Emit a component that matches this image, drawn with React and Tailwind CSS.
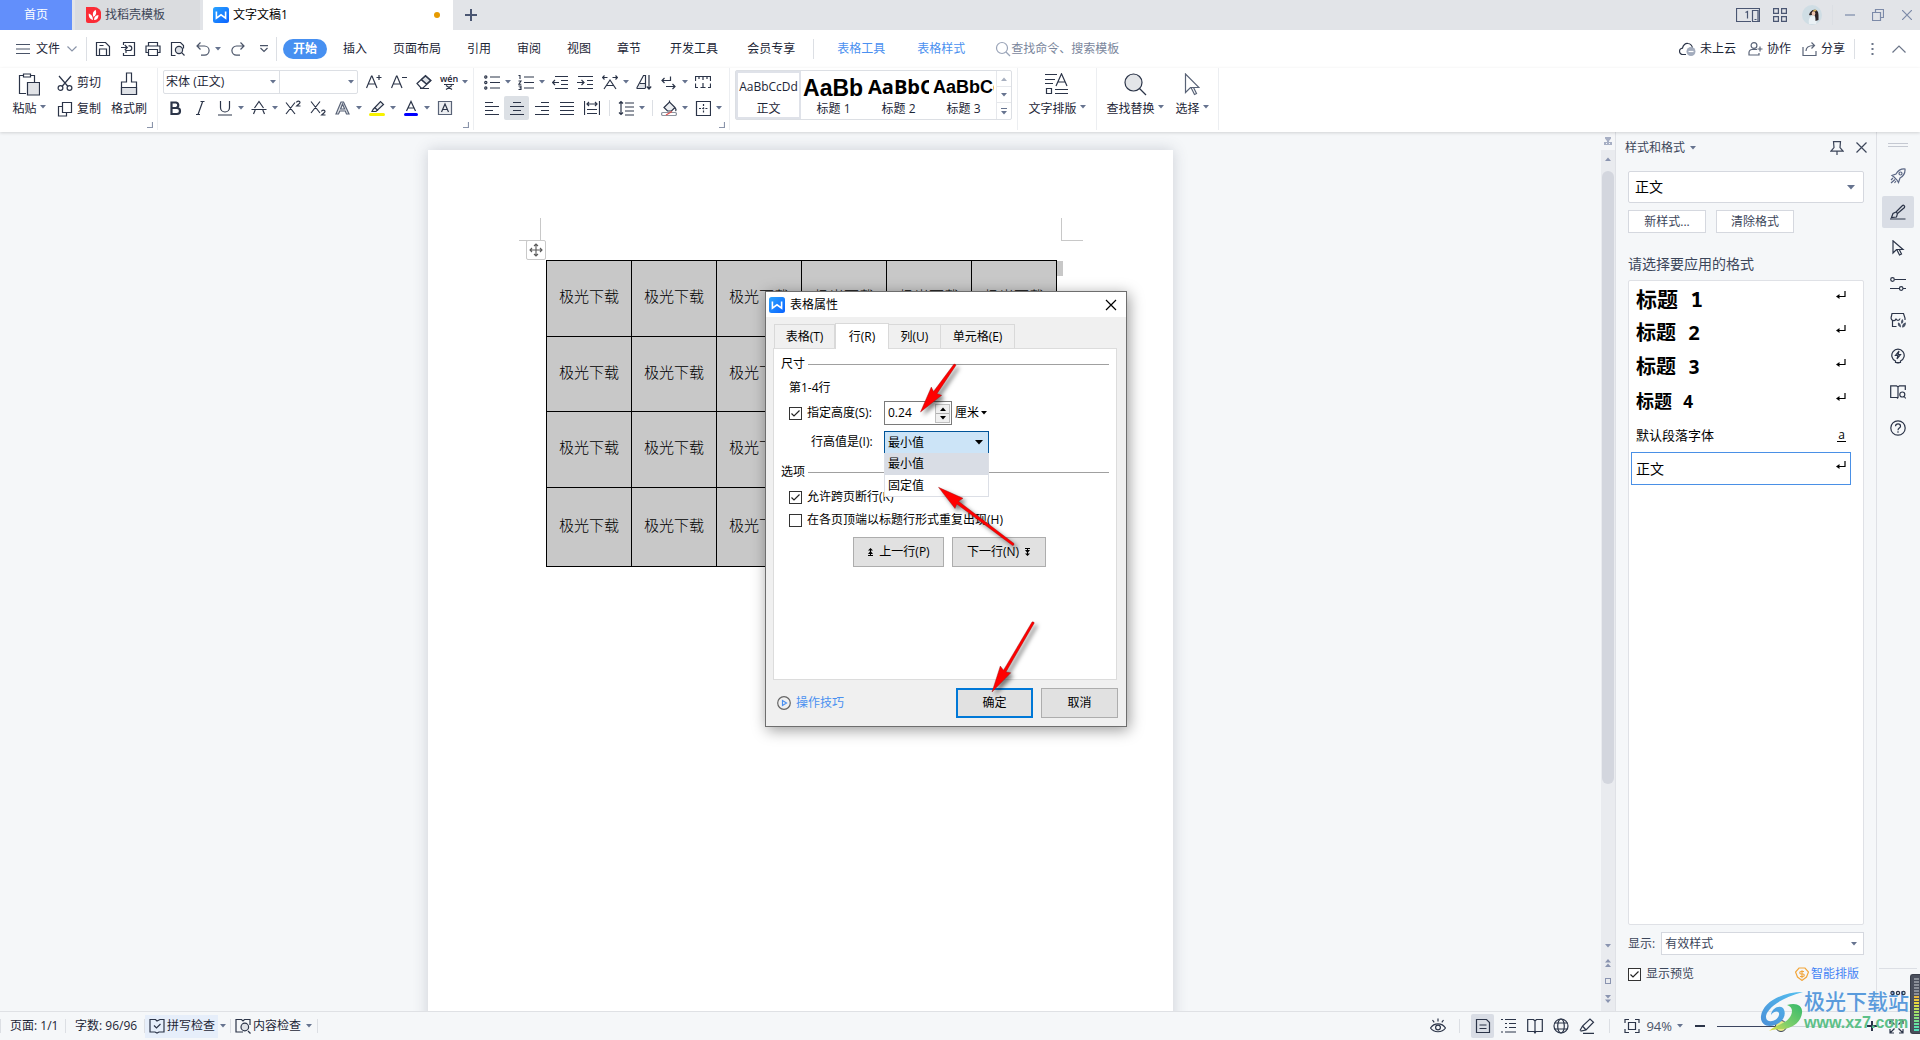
import React from "react";

const Svg = ({ w = 16, h = 16, s = "#2b3448", className = "", children }) => (
  <svg width={w} height={h} viewBox={`0 0 ${w} ${h}`} fill="none" stroke={s} strokeWidth="1.2" aria-hidden="true" className={"shrink-0 " + className}>
    {children}
  </svg>
);

const Caret = ({ c = "#66738f", className = "" }) => (
  <svg width="6" height="4" viewBox="0 0 6 4" aria-hidden="true" className={"shrink-0 " + className}>
    <path d="M0 0h6L3 3.6z" fill={c} />
  </svg>
);

const Divider = () => <div className="w-px h-[62px] shrink-0 bg-[#eceef1]" />;
const MiniDivider = ({ className = "" }) => <div className={"w-px shrink-0 bg-[#dcdfe4] " + className} />;
const Launcher = () => (
  <Svg w={6} h={6} s="#8a94aa" className="absolute bottom-1 right-1">
    <path d="M5.5 0v5.5H0" />
  </Svg>
);

const WpsLogo = ({ size = 16 }) => (
  <svg width={size} height={size} viewBox="0 0 16 16" aria-hidden="true" className="shrink-0">
    <defs>
      <linearGradient id="wg" x1="0" y1="0" x2="1" y2="1">
        <stop offset="0" stopColor="#2ba4ff" />
        <stop offset="1" stopColor="#0a62ff" />
      </linearGradient>
    </defs>
    <rect width="16" height="16" rx="2.5" fill="url(#wg)" />
    <path d="M3.4 4.6v6.6L8 7.8l4.6 3.400V4.6" fill="none" stroke="#fff" strokeWidth="1.6" />
  </svg>
);

/* ---------- icon drawings, 16 x 16 ---------- */
const A = "#2b3448";
const I = {
  save: <Svg><path d="M1.5 14.5v-13h9l4 4v9zM4.500 14.500v-6.500h7v6.500M4.500 4.500h4" /></Svg>,
  out: <Svg><path d="M3.500 4V1.500h11v13h-11V12M1 6.500h6M4.800 4l2.500 2.500L4.800 9M6 12V9.500h3.500a2.300 2.300 0 0 0 0-4.600H8.500" /></Svg>,
  print: <Svg><path d="M3.500 5V1.500h9V5M3.500 11.500h-2.500v-6.500h14v6.500h-2.500M3.500 8.500h9v6h-9z" /></Svg>,
  preview: <Svg><path d="M5.500 14.500h-4v-13h9l3 3v3M14.500 14.500l-2.800-2.800" /><circle cx="9" cy="9" r="3.600" fill="#dfe2e7" /></Svg>,
  undo: <Svg s="#4a5468"><path d="M5.500 1.500l-3.500 3.500 3.500 3.500M2 5h7.500a4.600 4.600 0 0 1 0 9.200H6" /></Svg>,
  redo: <Svg s="#4a5468"><path d="M10.500 1.500l3.500 3.500-3.500 3.500M14 5H6.500a4.600 4.600 0 0 0 0 9.200H10" /></Svg>,
  cut: <Svg><circle cx="3.500" cy="13" r="2.400" /><circle cx="12.500" cy="13" r="2.400" /><path d="M2 1l9 10.500M14 1L5 11.500" /></Svg>,
  copy: <Svg><path d="M5.500 1.500h9v10h-9zM5 5.500H1.500v9.500h8V12" /></Svg>,
  aPlus: <Svg><path d="M.5 14L5.500 2h.5l5 12M2.500 10h6.500M10.500 3.500h5M13 1v5" /></Svg>,
  aMinus: <Svg><path d="M.5 14L5.500 2h.5l5 12M2.500 10h6.500M11 3.500h5" /></Svg>,
  eraser: <Svg><path d="M1 9.500L9.500 1.500l5.500 5-8 7.500H5zM5 5.500l6 5M4 14.500h9" /><path d="M5.500 5.500L9.500 2l5 4.500-4 3.500z" fill="#dfe2e7" /></Svg>,
  italic: <Svg><path d="M10.500 2L6 14.500M8.500 1.500h4M4 14.500h4" /></Svg>,
  under: <Svg><path d="M3.500 1v6.500a4.500 4.500 0 0 0 9 0V1M1 15h14" /></Svg>,
  strike: <Svg><path d="M3.500 8L8 1.500 12.500 8M2.500 14l1.700-4M13.500 14l-1.700-4M0.500 9.500h15" /></Svg>,
  sup: <Svg><path d="M1 2.500l9 11.500M10 2.500L1 14M11.500 2.500c.3-2 3.500-1.800 3.500 0 0 1-1.500 1.600-3.300 3.500H15.500" /></Svg>,
  sub: <Svg><path d="M1 1.500l9 11.500M10 1.500L1 13M11.500 11.500c.3-2 3.500-1.800 3.500 0 0 1-1.500 1.600-3.300 3.500H15.500" /></Svg>,
  effect: <Svg s="#596377"><path d="M1 14L6 2h2.500L14 14h-2.500l-1.200-3H4.800L3.500 14zM5.600 9h4L7.500 4z" fill="#e4e6ea" /></Svg>,
  hilite: <Svg><path d="M4 9.500L11.500 1.500 14.500 4.500 7 11.500H3z" fill="#eceef1" /><path d="M5.500 7.500l3.500 3" /><rect x="0" y="13" width="16" height="3" rx="1.500" fill="#f7f200" stroke="none" /></Svg>,
  color: <Svg><path d="M3.500 11L8 1.500 12.500 11M5 8h6" /><rect x="1" y="13" width="14" height="3" rx="1.500" fill="#0000ff" stroke="none" /></Svg>,
  abox: <Svg><path d="M1.500 1.500h13v13h-13z" fill="#eceef1" stroke="#596377" /><path d="M4.500 12L8 4l3.500 8M5.800 9.500h4.500" /></Svg>,
  bullets: <Svg><path d="M6 3h10M6 8.500h10M6 14h10" /><circle cx="1.800" cy="3" r="1.100" /><circle cx="1.800" cy="8.500" r="1.100" /><circle cx="1.800" cy="14" r="1.100" /></Svg>,
  numbers: <Svg><path d="M6 3h10M6 8.500h10M6 14h10M0.500 1.500h1.500v3.500M0.500 7h2.500L.8 10.200H3.300M.5 12h2.500v3.500H.5M1.500 13.700h1.500" strokeWidth="1.100" /></Svg>,
  outdent: <Svg><path d="M3 2.500h13M9 6.500h7M9 10.500h7M3 14.500h13M0.500 8.500H7M3 6L.6 8.500 3 11" /></Svg>,
  indent: <Svg><path d="M1 2.500h15M10 6.500h6M10 10.500h6M1 14.500h15M0 8.500H7M4.500 6L7 8.500 4.500 11" /></Svg>,
  scale: <Svg><path d="M2 15L8 6l6 9M4.500 11.500h7M0.500 3.500h5M10.500 3.500h5M2.500 1.500l-2 2 2 2M13.500 1.500l2 2-2 2" /></Svg>,
  sort: <Svg><path d="M2 14l3-5h4v5z" fill="#dfe2e7" stroke="none" /><path d="M.8 14L7.500 1.500h2V14M4 9.500h5.500M0.500 14.500h9M13 1v14M10.800 12.500L13 15l2.200-2.500" /></Svg>,
  wrap: <Svg><path d="M9.500 2.500v4H1M3.500 4L1 6.500 3.500 9M5 12.500h9M11.500 10l2.500 2.500-2.500 2.500" /></Svg>,
  ruler: <Svg><path d="M.5 7V2.500h15V7M4 2.500V5M8 2.500V6M12 2.500V5M.5 9.500v4H3M15.500 9.500v4H13M5.500 13.500h5M8 9v4.500" /></Svg>,
  left: <Svg><path d="M1 2.500h8M1 6.500h14M1 10.500h8M1 14.500h14" /></Svg>,
  center: <Svg><path d="M4 2.500h8M1 6.500h14M4 10.500h8M1 14.500h14" /></Svg>,
  right: <Svg><path d="M7 2.500h8M1 6.500h14M7 10.500h8M1 14.500h14" /></Svg>,
  justify: <Svg><path d="M1 2.500h14M1 6.500h14M1 10.500h14M1 14.500h14" /></Svg>,
  dist: <Svg><path d="M.5 1v14M15.500 1v14M3 9.500h10M3 13.500h10M3 4h10M5 2L3 4l2 2M11 2l2 2-2 2" /></Svg>,
  line: <Svg><path d="M7 3h9M7 7h9M7 11h9M7 15h9M3 1.500v13M1 3.500L3 1.500l2 2M1 12.500l2 2 2-2" /></Svg>,
  shade: <Svg><path d="M3 7.500L8.500 2l5.500 5.500-3.500 3.500h-4zM8.500 2V.5M14 8c1 1 1.500 2 .5 3" fill="#eceef1" /><path d="M3 12.500h11a1.300 1.300 0 0 1 0 3H2a1.300 1.300 0 0 1 0-3z" fill="#fff" stroke="#8d949f" /><path d="M5 15l6-3.500" stroke="#e0524e" /></Svg>,
  border: <Svg><path d="M1.500 1.500h14v14h-14z" /><path d="M8.500 4v9M4 8.500h9" strokeDasharray="2 1.200" /></Svg>,
  search: (c = "#7a869c") => <Svg s={c}><circle cx="7" cy="7" r="5.500" /><path d="M11 11l4 4" /></Svg>,
};

const Wen = () => (
  <span className="flex w-4 shrink-0 flex-col items-center text-[9px] leading-[9px] font-semibold">
    <span>wén</span>
    <Svg w={12} h={7}><path d="M1 1.500h10M3 6.500l6-4M3 2.500l6 4" /></Svg>
  </span>
);

const Tool = ({ label, children, caret, last }) => (
  <button
    aria-label={label}
    className={"flex h-6 shrink-0 items-center gap-[5px] " + (last ? "" : caret ? "w-[34px]" : "w-[25px]")}
  >
    {children}
    {caret && <Caret />}
  </button>
);

const BigTool = ({ label, icon, caret, className = "" }) => (
  <button className={"flex shrink-0 flex-col items-center pt-1 " + className}>
    <span className="flex h-6 items-center">{icon}</span>
    <span className="flex h-[26px] items-center gap-[3px] leading-4 whitespace-nowrap">
      {label}
      {caret && <Caret className="mb-1" />}
    </span>
  </button>
);

function TitleBar() {
  return (
    <div className="flex h-[30px] shrink-0 bg-[#e2e4e8]">
      <button className="w-[72px] bg-[#628ffb] text-white">首页</button>
      <button className="ml-[3px] flex w-[125px] items-center gap-1 bg-[#dadcdf] pl-[11px] text-[#3d4557]">
        <svg width="15" height="16" viewBox="0 0 15 16" aria-hidden="true">
          <path d="M0 0h8a7.500 8 0 0 1 0 16H2a2 2 0 0 1-2-2z" fill="#fb2c36" />
          <path d="M7 13C3.500 12 2.500 9.500 2.800 6.500 5.500 7.500 7 9.500 7 13zM7.500 10C6 7 7 4.500 9.500 2.800 11 6 10 8.500 7.500 10zM8 13c0-3 1.500-4.500 4.500-5 0 3-1.500 5-4.500 5z" fill="#fff" />
        </svg>
        找稻壳模板
      </button>
      <button className="ml-[3px] flex w-[250px] items-center gap-1 bg-white pr-[13px] pl-[10px] text-black">
        <WpsLogo />
        文字文稿1
        <span className="ml-auto size-[6px] rounded-full bg-[#e69a00]" />
      </button>
      <button aria-label="新建" className="flex w-9 items-center justify-center">
        <Svg w={12} h={12} s="#4a5672"><path d="M6 0v12M0 6h12" strokeWidth="2" /></Svg>
      </button>
      <div className="ml-auto flex items-center pr-2">
        <button aria-label="窗口布局">
          <Svg w={24} h={14} s="#4a5672"><path d="M15 13.500H.5V.5h23v13H16.500V2.500h5.500v11" /><path d="M9.500 4.500l2-1v7M18.500 11.500h2" /></Svg>
        </button>
        <button aria-label="应用" className="ml-[13px]">
          <Svg w={14} h={14} s="#4a5672"><path d="M.6.6h4.800v4.800H.6zM8.600.6h4.800v4.800H8.600zM.6 8.600h4.800v4.800H.6zM8.600 8.600h4.800v4.800H8.600z" /></Svg>
        </button>
        <svg width="20" height="20" viewBox="0 0 20 20" className="ml-[15px]" aria-hidden="true">
          <circle cx="10" cy="10" r="10" fill="#cfdde4" />
          <path d="M7 19c-1-5 1-8 4-8s5 2 3 8z" fill="#eaf1f5" />
          <path d="M7 10c1-4 4-6 7-5 3 1 2.500 6 2.500 10l-3 1c0-4-.5-5-1.500-7-1 1-3 1.500-5 1z" fill="#2c2225" />
          <ellipse cx="11.500" cy="8.500" rx="1.800" ry="2.300" fill="#ecc3ae" />
          <path d="M11 5.500l3-1 .5 1.500-3 .8z" fill="#d9b35c" />
        </svg>
        <MiniDivider className="ml-[10px] h-5" />
        <button aria-label="最小化" className="ml-3"><Svg w={10} h={10} s="#7c8aa8"><path d="M0 5h10" /></Svg></button>
        <button aria-label="还原" className="ml-[17px]"><Svg w={12} h={12} s="#7c8aa8"><path d="M.5 3.500h8v8h-8zM3.500 3.500V.5h8v8h-3" /></Svg></button>
        <button aria-label="关闭" className="ml-[18px]"><Svg w={10} h={10} s="#7c8aa8"><path d="M0 0l10 10M10 0L0 10" /></Svg></button>
      </div>
    </div>
  );
}

const menuTabs = ["插入", "页面布局", "引用", "审阅", "视图", "章节"];

function MenuRow() {
  return (
    <div className="flex h-[38px] shrink-0 items-center bg-white pr-[14px] pl-4">
      <button className="flex items-center gap-[6px]">
        <Svg w={14} h={10} s="#4a5468"><path d="M0 .5h14M0 5h14M0 9.500h14" /></Svg>
        文件
        <Svg w={10} h={6} s="#8a94a8" className="ml-[1px]"><path d="M.5.500L5 5 9.500.500" /></Svg>
      </button>
      <MiniDivider className="ml-[9px] h-6" />
      <div className="flex items-center gap-[9px] pl-2">
        <button aria-label="保存">{I.save}</button>
        <button aria-label="输出为PDF">{I.out}</button>
        <button aria-label="打印">{I.print}</button>
        <button aria-label="打印预览">{I.preview}</button>
        <button aria-label="撤销" className="flex items-center gap-1">{I.undo}<Caret /></button>
        <button aria-label="恢复">{I.redo}</button>
        <button aria-label="自定义" className="ml-1">
          <Svg w={10} h={8} s="#4a5468"><path d="M1 .600h8M1.500 3l3.500 3.500L8.500 3" /></Svg>
        </button>
      </div>
      <MiniDivider className="ml-[7px] h-6" />
      <button className="ml-[6px] h-5 w-[44px] shrink-0 rounded-full bg-[#4790f1] font-bold text-white">开始</button>
      <nav className="ml-[3px] flex items-center whitespace-nowrap">
        {menuTabs.map((t) => <button key={t} className="px-[13px]">{t}</button>)}
        <button className="ml-[3px] px-[13px]">开发工具</button>
        <button className="ml-[3px] px-[13px]">会员专享</button>
        <MiniDivider className="mx-[5px] h-5" />
        <button className="ml-[5px] px-[13px] text-[#4a90f0]">表格工具</button>
        <button className="ml-[6px] px-[13px] text-[#4a90f0]">表格样式</button>
      </nav>
      <button className="ml-[17px] flex items-center whitespace-nowrap text-[#7a869c]">{I.search("#9aa4b8")}查找命令、搜索模板</button>
      <div className="ml-auto flex items-center whitespace-nowrap">
        <button className="flex items-center gap-1">
          <Svg w={17} h={14}><path d="M7 12.500H4a3.200 3.200 0 0 1-.5-6.400C4 3 6.500 1 9 1.500c2.500.2 4 2 4.500 4.500" /><circle cx="12" cy="9.500" r="4.500" fill="#a3acbd" stroke="none" /><path d="M9.500 9.500h5" stroke="#fff" /></Svg>
          未上云
        </button>
        <button className="ml-3 flex items-center gap-1">
          <Svg w={15} h={14} s="#5a6478"><circle cx="6" cy="3.500" r="2.900" /><path d="M9 7.500H4a3 3 0 0 0-3 3v2.500h10v-2M12 4.500v5M9.500 7h5" /></Svg>
          协作
        </button>
        <button className="ml-[11px] flex items-center gap-1">
          <Svg w={15} h={14} s="#5a6478"><path d="M1 5v8.500h13V9M4 9c0-4 3-5.500 8-5.500M9.500.500l3 3-3 3" /></Svg>
          分享
        </button>
        <MiniDivider className="ml-[9px] h-5" />
        <button aria-label="更多" className="ml-4"><Svg w={3} h={12} s="none"><path d="M.5 0h2v2h-2zM.5 5h2v2h-2zM.5 10h2v2h-2z" fill="#6b7588" /></Svg></button>
        <button aria-label="收起功能区" className="ml-[18px]"><Svg w={14} h={8} s="#6b7588"><path d="M.5 7.500L7 1l6.500 6.500" /></Svg></button>
      </div>
    </div>
  );
}

function Ribbon() {
  return (
    <div className="z-10 flex h-16 shrink-0 bg-white shadow-[0_1px_3px_rgba(0,0,0,0.15)]">
      <div className="relative flex pl-2 pr-[9px]">
        <BigTool className="w-[42px]" label="粘贴" caret icon={
          <Svg w={22} h={23}><path d="M8 20.500H1.500v-18H5M13 2.500h3.500V9M5.500 1h7v3h-7z" /><path d="M9.500 9.500h12v12.500h-12z" fill="#e1e3e7" /></Svg>
        } />
        <div className="ml-[7px] flex flex-col gap-[2px] pt-[3px]">
          <button className="flex h-6 items-center gap-1 whitespace-nowrap">{I.cut}剪切</button>
          <button className="flex h-6 items-center gap-1 whitespace-nowrap">{I.copy}复制</button>
        </div>
        <BigTool className="ml-[9px] w-[38px]" label="格式刷" icon={
          <Svg w={18} h={24}><path d="M6.500 1h5v9h5v12.500h-15V10h5z" /><path d="M1.500 15.500h15v7h-15z" fill="#dfe2e7" /></Svg>
        } />
        <Launcher />
      </div>
      <Divider />
      <div className="relative flex flex-col gap-[2px] pt-[2px] pr-[5px] pl-[5px]">
        <div className="flex">
          <div className="flex rounded-[2px] border border-[#dcdfe4]">
            <label className="flex w-[115px] items-center">
              <select aria-label="字体" className="w-full appearance-none bg-transparent pl-[2px] outline-none">
                <option>宋体 (正文)</option>
              </select>
              <Caret className="-ml-[9px] mr-[3px]" />
            </label>
            <label className="flex w-[78px] items-center border-l border-[#dcdfe4]">
              <select aria-label="字号" className="w-full appearance-none bg-transparent pl-[2px] outline-none">
                <option></option>
              </select>
              <Caret className="-ml-[9px] mr-[3px]" />
            </label>
          </div>
          <div className="ml-2 flex">
            <Tool label="增大字号">{I.aPlus}</Tool>
            <Tool label="减小字号">{I.aMinus}</Tool>
            <Tool label="清除格式">{I.eraser}</Tool>
            <Tool label="拼音指南" caret last><Wen /></Tool>
          </div>
        </div>
        <div className="flex pl-1">
          <Tool label="加粗"><Svg s={A}><path d="M4.500 2.500h4.500a2.800 2.800 0 0 1 0 5.500H4.500zM4.500 8h5.500a3 3 0 0 1 0 6H4.500z" strokeWidth="2.200" /></Svg></Tool>
          <Tool label="倾斜">{I.italic}</Tool>
          <Tool label="下划线" caret>{I.under}</Tool>
          <Tool label="删除线" caret>{I.strike}</Tool>
          <Tool label="上标">{I.sup}</Tool>
          <Tool label="下标">{I.sub}</Tool>
          <Tool label="文字效果" caret>{I.effect}</Tool>
          <Tool label="突出显示" caret>{I.hilite}</Tool>
          <Tool label="字体颜色" caret>{I.color}</Tool>
          <Tool label="字符底纹" last>{I.abox}</Tool>
        </div>
        <Launcher />
      </div>
      <Divider />
      <div className="relative flex flex-col gap-[2px] pt-[2px] pr-[7px] pl-[10px]">
        <div className="flex">
          <Tool label="项目符号" caret>{I.bullets}</Tool>
          <Tool label="编号" caret>{I.numbers}</Tool>
          <Tool label="减少缩进">{I.outdent}</Tool>
          <Tool label="增加缩进">{I.indent}</Tool>
          <Tool label="中文版式" caret>{I.scale}</Tool>
          <Tool label="排序">{I.sort}</Tool>
          <Tool label="显示段落标记" caret>{I.wrap}</Tool>
          <Tool label="制表位" last>{I.ruler}</Tool>
        </div>
        <div className="flex items-center">
          <Tool label="左对齐">{I.left}</Tool>
          <button aria-label="居中对齐" className="-ml-[5px] mr-[5px] flex h-6 w-[25px] items-center justify-center rounded-[2px] bg-[#dce0e5]">{I.center}</button>
          <Tool label="右对齐">{I.right}</Tool>
          <Tool label="两端对齐">{I.justify}</Tool>
          <Tool label="分散对齐">{I.dist}</Tool>
          <MiniDivider className="mr-2 h-4" />
          <Tool label="行距" caret>{I.line}</Tool>
          <MiniDivider className="mr-2 h-4" />
          <Tool label="底纹颜色" caret>{I.shade}</Tool>
          <Tool label="边框" caret last>{I.border}</Tool>
        </div>
        <Launcher />
      </div>
      <Divider />
      <div className="flex px-[5px] pt-[2px]">
        <div className="flex h-[50px] rounded-[2px] border border-[#dcdfe4]">
          <button className="flex w-[65px] flex-col items-center overflow-hidden border-2 border-[#dfe2e9]">
            <span className="h-7 text-[12px] leading-7">AaBbCcDd</span>
            <span className="leading-4">正文</span>
          </button>
          <button className="flex w-[65px] flex-col items-center overflow-hidden pt-[2px]">
            <span className="h-7 w-[61px] overflow-hidden text-left font-['Liberation_Sans'] text-[23px] leading-[30px] font-bold text-black">AaBb</span>
            <span className="leading-4">标题 1</span>
          </button>
          <button className="flex w-[65px] flex-col items-center overflow-hidden pt-[2px]">
            <span className="h-7 w-[61px] overflow-hidden text-left text-[20px] leading-7 font-bold text-black">AaBbCcDd</span>
            <span className="leading-4">标题 2</span>
          </button>
          <button className="flex w-[65px] flex-col items-center overflow-hidden pt-[2px]">
            <span className="h-7 w-[61px] overflow-hidden text-left font-['Liberation_Sans'] text-[18px] leading-7 font-bold text-black">AaBbCcDd</span>
            <span className="leading-4">标题 3</span>
          </button>
          <div className="flex w-[15px] flex-col divide-y divide-[#e6e8ec] border-l border-[#e6e8ec]">
            <button aria-label="上一行样式" className="flex h-4 items-center justify-center"><Caret c="#a7afbf" className="rotate-180" /></button>
            <button aria-label="下一行样式" className="flex h-4 items-center justify-center"><Caret /></button>
            <button aria-label="更多样式" className="flex flex-1 flex-col items-center justify-center gap-[2px]"><span className="h-px w-[6px] bg-[#66738f]" /><Caret /></button>
          </div>
        </div>
      </div>
      <Divider />
      <BigTool className="w-[78px]" label="文字排版" caret icon={
        <Svg w={24} h={22}><path d="M0 1.500h12M0 6.500h10M0 10.500h8M1.500 15.500h5v5h-5zM10 16.500h13M10 20.500h13" /><path d="M11 13L16.500.800 22 13M13 9h7" /></Svg>
      } />
      <Divider />
      <BigTool className="w-[76px]" label="查找替换" caret icon={
        <Svg w={23} h={23}><circle cx="9.500" cy="9.500" r="8.500" fill="#e3e5e8" /><path d="M15.500 15.500l6.500 6.500" /></Svg>
      } />
      <BigTool className="mr-[7px] w-[38px]" label="选择" caret icon={
        <Svg w={16} h={23} s="#596377"><path d="M1.500 1v18.500l5-5h8.500zM7 14.500l3.500 7 2-1-3-6" /></Svg>
      } />
      <Divider />
    </div>
  );
}

const rowHeights = ["h-[76px]", "h-[75px]", "h-[76px]", "h-[79px]"];

function DocPage() {
  return (
    <div className="relative mx-auto mt-[18px] min-h-full w-[745px] bg-white pt-[68px] shadow-[0_0_14px_rgba(60,70,90,0.22)]">
      <div className="flex justify-between pr-[90px] pl-[91px]">
        <div className="h-[23px] w-[22px] border-r border-b border-[#c8c8c8]" />
        <div className="h-[23px] w-[22px] border-b border-l border-[#c8c8c8]" />
      </div>
      <div className="mt-[19px] ml-[118px] flex">
        <table className="w-[511px] table-fixed border-collapse bg-[#c8c8c8] font-['Liberation_Serif','Noto_Sans_CJK_SC',sans-serif] text-[15px] leading-5 font-light text-black">
          <tbody>
            {rowHeights.map((h, r) => (
              <tr key={r} className={h}>
                {[0, 1, 2, 3, 4, 5].map((c) => (
                  <td key={c} className="border border-black p-0 pb-[3px] text-center whitespace-nowrap">极光下载</td>
                ))}
              </tr>
            ))}
          </tbody>
        </table>
        <div className="mt-px h-[15px] w-[6px] bg-[#c8c8c8]" />
      </div>
      <div className="absolute top-[90px] left-[98px] flex size-5 items-center justify-center rounded-[2px] border border-[#c9c9c9] bg-white">
        <Svg w={14} h={14} s="#5a5a5a"><path d="M7 1v12M1 7h12M5 3l2-2 2 2M5 11l2 2 2-2M3 5L1 7l2 2M11 5l2 2-2 2" strokeWidth="1.100" /></Svg>
      </div>
    </div>
  );
}

const Check = ({ checked, children }) => (
  <label className="flex items-center gap-[5px] whitespace-nowrap">
    <span className="grid size-[13px] shrink-0 place-items-center">
      <input type="checkbox" defaultChecked={checked} className="peer col-start-1 row-start-1 size-[13px] appearance-none border border-[#333] bg-white" />
      <svg width="11" height="11" viewBox="0 0 11 11" className="pointer-events-none invisible col-start-1 row-start-1 peer-checked:visible" aria-hidden="true">
        <path d="M1.500 5.500L4 8l5.500-5.500" fill="none" stroke="#222" strokeWidth="1.200" />
      </svg>
    </span>
    {children}
  </label>
);

const Section = ({ title, className = "" }) => (
  <div className={"flex h-4 items-center gap-[3px] leading-4 " + className}>
    {title}
    <div className="h-px flex-1 bg-[#a0a0a0]" />
  </div>
);

const DoubleArrow = ({ down }) => (
  <svg width="7" height="8" viewBox="0 0 7 8" className={down ? "rotate-180" : ""} aria-hidden="true">
    <path d="M3.500 0L6 2.500H4v1L6 6H4v1h2v1H1V7h2V6H1l2-2.500v-1H1z" fill="#000" />
  </svg>
);

function Dialog() {
  return (
    <div role="dialog" aria-label="表格属性" className="absolute top-[291px] left-[765px] z-20 flex h-[436px] w-[362px] flex-col border border-[#6e6e6e] bg-[#f0f0f0] text-black shadow-[2px_3px_14px_rgba(0,0,0,0.4)]">
      <div className="flex h-[25px] items-center gap-[5px] bg-white pr-[9px] pl-[3px]">
        <WpsLogo />
        表格属性
        <button aria-label="关闭" className="ml-auto"><Svg w={12} h={12} s="#000"><path d="M1 1l10 10M11 1L1 11" /></Svg></button>
      </div>
      <div className="flex items-end pt-[6px] pl-2 whitespace-nowrap" role="tablist">
        <button role="tab" className="h-6 w-[61px] border border-b-0 border-[#d9d9d9] text-center">表格(T)</button>
        <button role="tab" aria-selected="true" className="z-10 -mb-px h-[26px] w-[54px] border border-b-0 border-[#d9d9d9] bg-white">行(R)</button>
        <button role="tab" className="h-6 w-[52px] border border-b-0 border-l-0 border-[#d9d9d9]">列(U)</button>
        <button role="tab" className="h-6 w-[74px] border border-b-0 border-l-0 border-[#d9d9d9]">单元格(E)</button>
      </div>
      <div className="mr-[9px] ml-[7px] flex flex-1 flex-col border border-[#dcdcdc] bg-white px-[7px] pt-[7px]">
        <Section title="尺寸" />
        <div className="pl-2">
          <p className="mt-[6px] h-5 leading-5">第1-4行</p>
          <div className="mt-[3px] flex h-6 items-center">
            <div className="w-[95px]"><Check checked>指定高度(S):</Check></div>
            <div className="flex h-6 w-[68px] items-center border border-[#7a7a7a] bg-white pr-px">
              <input aria-label="指定高度" defaultValue="0.24" className="min-w-0 flex-1 pl-[3px] text-[12px] outline-none" />
              <span className="flex h-[19px] w-[15px] flex-col border border-[#c0c0c0] bg-[#f0f0f0]">
                <button aria-label="增加" className="flex flex-1 items-center justify-center border-b border-[#b0b0b0]"><Caret c="#000" className="rotate-180" /></button>
                <button aria-label="减少" className="flex flex-1 items-center justify-center"><Caret c="#000" /></button>
              </span>
            </div>
            <button className="ml-[3px] flex items-center gap-[2px] whitespace-nowrap">厘米<Caret c="#000" /></button>
          </div>
          <div className="relative mt-[6px] flex h-[22px] items-center">
            <label htmlFor="rule" className="w-[95px] pl-[22px] whitespace-nowrap">行高值是(I):</label>
            <div className="flex h-[22px] w-[105px] items-center border border-b-0 border-[#005499] bg-[#cce4f7]">
              <select id="rule" className="w-full appearance-none bg-transparent pl-[3px] outline-none"><option>最小值</option><option>固定值</option></select>
              <svg width="8" height="5" viewBox="0 0 8 5" className="-ml-[13px] mr-[5px] shrink-0" aria-hidden="true"><path d="M0 0h8L4 4.500z" fill="#000" /></svg>
            </div>
            <ul className="absolute top-[22px] left-[95px] z-10 w-[105px] border border-t-0 border-[#dcdfe6] bg-white">
              <li className="bg-[#d9dde5] pl-[3px] leading-[22px]">最小值</li>
              <li className="pl-[3px] leading-[21px]">固定值</li>
            </ul>
          </div>
        </div>
        <Section title="选项" className="mt-[11px]" />
        <div className="flex flex-col gap-[3px] pt-[7px] pl-2">
          <div className="flex h-5 items-center"><Check checked>允许跨页断行(K)</Check></div>
          <div className="flex h-5 items-center"><Check>在各页顶端以标题行形式重复出现(H)</Check></div>
        </div>
        <div className="mt-[7px] flex gap-2 pl-[72px] whitespace-nowrap">
          <button className="flex h-[30px] w-[91px] items-center justify-center gap-[5px] border border-[#adadad] bg-[#e1e1e1]"><DoubleArrow />上一行(P)</button>
          <button className="flex h-[30px] w-[94px] items-center justify-center gap-[5px] border border-[#adadad] bg-[#e1e1e1]">下一行(N)<DoubleArrow down /></button>
        </div>
      </div>
      <div className="flex h-[46px] items-center gap-2 pr-2 pl-[11px]">
        <a href="#" className="mr-auto flex items-center gap-[5px] text-[#4a90f0]">
          <Svg w={14} h={14} s="#666"><circle cx="7" cy="7" r="6.300" /><path d="M5.500 4.500v5L9.500 7z" stroke="#4a90f0" /></Svg>
          操作技巧
        </a>
        <button className="h-[30px] w-[77px] border-2 border-[#0078d7] bg-[#e1e1e1]">确定</button>
        <button className="h-[30px] w-[77px] border border-[#adadad] bg-[#e1e1e1]">取消</button>
      </div>
      <svg width="362" height="436" viewBox="765 291 362 436" className="pointer-events-none absolute -top-px -left-px z-20 drop-shadow-[3px_3px_2px_rgba(0,0,0,0.5)]" aria-hidden="true">
        <g fill="#ff0000" stroke="#8f1010" strokeWidth=".4">
          <path d="M920.500 412l10.800-25 2.200 4.500 20.300-27.200q1.500-.8 2.200.9L937 393.700l4.700 1.600z" />
          <path d="M938.500 487.300l24.500 11-4.500 3 55.500 42.200q.5 1.800-1.500 2L956.800 504l-1.800 4.500z" />
          <path d="M992 692l8.300-26 3.200 4.200 28.500-48.200q1.600-.7 2.300.9L1006 672l4.800.8z" />
        </g>
      </svg>
    </div>
  );
}

function ScrollBar() {
  return (
    <div className="flex w-[15px] shrink-0 flex-col items-center border-r border-[#dfe1e6] bg-[#e9ebef]">
      <div className="flex h-[18px] w-full items-center justify-center bg-[#f5f6f8]">
        <svg width="8" height="8" viewBox="0 0 8 8" aria-hidden="true"><path d="M1 0h6v1.500L5 4v1h3v3H0V5h3V4L1 1.500zM2 6v1h1V6zM5 6v1h1V6z" fill="#a7afc4" /></svg>
      </div>
      <Caret className="mt-[7px] rotate-180" c="#8a94b0" />
      <div className="mt-[10px] h-[613px] w-[12px] rounded-full bg-[#d3d6de]" />
      <div className="mt-auto flex flex-col items-center gap-[11px] pb-2">
        <Caret c="#8a94b0" />
        <svg width="6" height="8" viewBox="0 0 6 8" fill="#8a94b0"><path d="M0 3.500h6L3 0zM0 8h6L3 4.500z" /></svg>
        <span className="size-[6px] border border-[#8a94b0]" />
        <svg width="6" height="8" viewBox="0 0 6 8" fill="#8a94b0"><path d="M0 0h6L3 3.500zM0 4.500h6L3 8z" /></svg>
      </div>
    </div>
  );
}

const Ret = () => <Svg w={10} h={10} s="#000"><path d="M9 1v5.500H2" /><path d="M0 6.500L3.500 4v5z" fill="#000" stroke="none" /></Svg>;

const styleRows = [
  ["标题 1", "text-[21px] font-bold"],
  ["标题 2", "text-[20px] font-bold"],
  ["标题 3", "text-[20px] font-bold"],
  ["标题 4", "text-[18px] font-bold"],
  ["默认段落字体", "text-[13px]"],
];

function StylePanel() {
  return (
    <aside className="flex w-[260px] shrink-0 flex-col px-3 text-[#3c465a]">
      <div className="-ml-[3px] flex h-[31px] items-center">
        <button className="flex items-center gap-[5px]">样式和格式<Caret /></button>
        <button aria-label="固定" className="ml-auto"><Svg w={14} h={14} s="#3c465a"><path d="M3.500.6h7l-.5 6 3 3.500H1l3-3.500zM7 10v4" /></Svg></button>
        <button aria-label="关闭" className="-mr-[3px] ml-3"><Svg w={11} h={11} s="#3c465a"><path d="M.5.500l10 10M10.500.500l-10 10" /></Svg></button>
      </div>
      <div className="mt-2 flex h-8 items-center rounded-[2px] border border-[#d5d8df] bg-white">
        <select aria-label="当前样式" className="w-full appearance-none bg-transparent pl-[6px] text-[14px] text-black outline-none"><option>正文</option></select>
        <svg width="8" height="5" viewBox="0 0 8 5" className="mr-2 -ml-4 shrink-0" aria-hidden="true"><path d="M0 0h8L4 4.500z" fill="#66738f" /></svg>
      </div>
      <div className="mt-[7px] flex gap-[10px]">
        <button className="h-[23px] w-[78px] border border-[#d5d8df] bg-white">新样式...</button>
        <button className="h-[23px] w-[78px] border border-[#d5d8df] bg-white">清除格式</button>
      </div>
      <div className="mt-5 text-[14px] leading-[22px]">请选择要应用的格式</div>
      <ul className="mt-[5px] flex-1 rounded-[2px] border border-[#dfe1e6] bg-white pt-px pl-[2px] text-black">
        {styleRows.map(([t, c]) => (
          <li key={t} className="flex h-[34px] items-center justify-between pr-[17px] pl-[5px]">
            <span className={"font-['Noto_Sans_Mono','Liberation_Sans','Noto_Sans_CJK_SC',sans-serif] whitespace-pre " + c}>{t}</span>
            {t.length > 5 ? <span className="border-b border-black px-px text-[12px] leading-[12px]">a</span> : <span className="mb-2"><Ret /></span>}
          </li>
        ))}
        <li className="mr-3 flex h-[33px] items-center justify-between border border-[#4a90e6] pr-1 pl-1 text-[14px]">
          正文<span className="mb-2"><Ret /></span>
        </li>
      </ul>
      <div className="mt-[7px] flex items-center gap-[6px]">
        <label htmlFor="show" className="whitespace-nowrap">显示:</label>
        <div className="flex h-[23px] flex-1 items-center border border-[#d5d8df] bg-white">
          <select id="show" className="w-full appearance-none bg-transparent pl-[3px] outline-none"><option>有效样式</option></select>
          <Caret className="mr-[6px] -ml-3" />
        </div>
      </div>
      <div className="mt-[9px] mb-[27px] flex h-5 items-center justify-between pr-[5px]">
        <Check checked>显示预览</Check>
        <a href="#" className="flex items-center gap-[2px] text-[#4583f5]">
          <Svg w={14} h={14} s="#f2a53a"><path d="M4 1h6l3.500 4-2 5L7 13.400 2.500 10 .5 5z" /><path d="M9 4.500H6a1.200 1.200 0 0 0 0 2.500h2a1.200 1.200 0 0 1 0 2.500H5M7 3.200v8" strokeWidth="1.100" /></Svg>
          智能排版
        </a>
      </div>
    </aside>
  );
}

const sideIcons = [
  ["快速工具", <Svg s="#5a6684"><path d="M15 1c-4-.3-7 1.500-9 5L2 7.500l2 1.500 3 3 1.500 2.500L10 10c3.500-2 5.300-5 5-9zM1 12l2-2M1 15l4-3.500M4.500 15l1.500-2" /><circle cx="10.500" cy="5.500" r="1.500" /></Svg>],
  ["样式", <Svg><path d="M1.500 13.500L3 9.500 6 8l1.500 1.500L6.500 13zM6 8l6.500-6.500c1-.8 2.800.8 2 2L7.500 9.500M0 15h15.500" /></Svg>],
  ["选择", <Svg><path d="M3 .800v12.200l3.500-3.500H13zM7 10l2.500 5 2-1-2.500-5" /></Svg>],
  ["属性", <Svg><circle cx="2.500" cy="3.500" r="1.800" /><path d="M4.500 3.500H16M0 12.500h9M13 12.500h3" /><circle cx="11.200" cy="12.500" r="1.800" /></Svg>],
  ["素材", <Svg><path d="M6.500 14.500H2.500V8.500M1 6l1-4.500h11.500L15 6v2M1 6c.5 3.500 4.500 3.500 5 .5.500 2.500 3.500 2.500 4 0" /><path d="M11 15.500c-3-1-3.500-3-3-5 2 .5 3 2 3 5zM11.500 12c-1-2-.3-4 1-5 1.500 2 1 4-1 5zM12 15.500c0-3 1.500-4.500 4-5 0 3-1.500 5-4 5z" fill="#4a5468" stroke="none" /></Svg>],
  ["推荐", <Svg><path d="M5.500 13a6.200 6.200 0 1 1 5 0v1.500h-5zM6.500 16h3" /><path d="M9 3L5.500 7.500H8L7 11l3.500-4.500H8z" /></Svg>],
  ["查阅", <Svg><path d="M8 3v11M8 3L6.500 1.800H.700V13.500H7L8 14.500M8 3l1.500-1.200h5.800V6" /><circle cx="12.300" cy="10.500" r="2.500" /><path d="M14.200 12.500l1.500 2" /></Svg>],
  ["帮助", <Svg><circle cx="8" cy="8" r="7.200" /><path d="M5.500 6.200c.2-3 5-3 5 0 0 1.800-2.500 2-2.500 4M8 11.300v1.400" /></Svg>],
];

function SideRail() {
  return (
    <aside className="flex w-[44px] shrink-0 flex-col items-center border-l border-[#dfe1e6] pr-px">
      <div className="mt-[11px] h-1 w-5 border-y border-[#c5c9d2]" />
      <div className="mt-[13px] flex flex-col gap-1">
        {sideIcons.map(([label, icon], i) => (
          <button key={label} aria-label={label} className={"flex size-8 items-center justify-center rounded-[2px] " + (i === 1 ? "bg-[#d9dde5]" : "")}>{icon}</button>
        ))}
      </div>
      <div className="mt-auto mb-[42px] h-px w-[38px] bg-[#dcdfe5]" />
    </aside>
  );
}

function StatusBar() {
  return (
    <footer className="flex h-[29px] shrink-0 items-center border-t border-[#dfe1e5] bg-[#f5f7f9] pr-4 whitespace-nowrap">
      <MiniDivider className="h-[14px]" />
      <span className="w-[64px] pl-[9px]">页面: 1/1</span>
      <MiniDivider className="h-[14px]" />
      <span className="w-[78px] pl-[9px]">字数: 96/96</span>
      <MiniDivider className="h-[14px]" />
      <button className="flex h-[23px] w-[73px] items-center gap-[2px] bg-[#e6eefa] pl-[4px]">
        <Svg><path d="M5 1.500H1v12.500h5l2 1 2-1h5V1.500h-4L8 3 6.500 1.500H5M5 7.500l2.500 2.500 4-4" /></Svg>拼写检查
      </button>
      <button aria-label="拼写检查选项" className="ml-[2px] w-[10px]"><Caret /></button>
      <MiniDivider className="h-[14px]" />
      <button className="ml-1 flex items-center gap-[2px]">
        <Svg><path d="M5 14H1V1.500h5.500L8 3l1.500-1.500H15V7M8 14H5M13 13l2.500 2.500" /><circle cx="9.800" cy="9" r="3.800" fill="#dfe2e7" /></Svg>内容检查<Caret className="ml-[3px]" />
      </button>
      <MiniDivider className="ml-[5px] h-[14px]" />
      <div className="ml-auto flex items-center">
        <button aria-label="护眼模式"><Svg><path d="M.5 10c3.500-5.500 11.500-5.500 15 0-3.500 5-11.500 5-15 0zM8 .500v3M2.500 2l1.700 2.300M13.500 2l-1.700 2.300" /><circle cx="8" cy="9.500" r="2.400" /></Svg></button>
        <MiniDivider className="ml-[13px] h-[14px]" />
        <div className="ml-[11px] flex items-center">
          <button aria-label="页面视图" className="flex h-6 w-[23px] items-center justify-center rounded-[2px] bg-[#d9dde5]"><Svg><path d="M1.500 1.500h10l3 3v10h-13zM4.500 7h7M4.500 10.500h7" /></Svg></button>
          <button aria-label="大纲" className="ml-[7px]"><Svg><path d="M0 1.500h2M4 1.500h11M4 5.500h2M8 5.500h7M4 9.500h2M8 9.500h7M0 14h2M4 14h11" /></Svg></button>
          <button aria-label="阅读版式" className="ml-[10px]"><Svg><path d="M8 3v12M8 3L6.500 1.500H.700V13.500H7L8 15l1-1.500h6.300V1.500H9.500z" /></Svg></button>
          <button aria-label="Web版式" className="ml-[10px]"><Svg><circle cx="8" cy="8" r="7" /><ellipse cx="8" cy="8" rx="3.300" ry="7" /><path d="M1.500 5h13M1.500 11h13" /></Svg></button>
          <button aria-label="写作模式" className="ml-[10px]"><Svg><path d="M1 12.500L3.500 8 11 1l3.500 3.200L7 12l-5.500 1.200M3.500 8L7 12M4 15.300h11" /></Svg></button>
        </div>
        <MiniDivider className="ml-[14px] h-[14px]" />
        <button aria-label="适合页面" className="ml-[14px]"><Svg><path d="M1 5V1.500h4M11 1.500h4V5M1 11v3.500h4M11 14.500h4V11M4.500 4.500h7v7h-7z" /></Svg></button>
        <button className="ml-[6px] flex items-center gap-[5px] text-[13px] text-[#4a5468]">94%<Caret /></button>
        <button aria-label="缩小" className="ml-3"><Svg w={10} h={10}><path d="M0 5h10" strokeWidth="2" /></Svg></button>
        <input type="range" aria-label="缩放" min="0" max="100" defaultValue="46" className="mx-[12px] h-3 w-[138px] appearance-none bg-[linear-gradient(to_right,#3b4560_46%,#cfd3da_46%)] bg-[length:100%_1px] bg-center bg-no-repeat [&::-webkit-slider-thumb]:size-3 [&::-webkit-slider-thumb]:appearance-none [&::-webkit-slider-thumb]:rounded-full [&::-webkit-slider-thumb]:border [&::-webkit-slider-thumb]:border-[#3b4560] [&::-webkit-slider-thumb]:bg-[#e9e98a]" />
        <button aria-label="放大"><Svg w={10} h={10}><path d="M0 5h10M5 0v10" strokeWidth="2" /></Svg></button>
        <button aria-label="全屏" className="ml-3"><Svg w={15} h={15}><path d="M1 5V1h4M1 1l4.500 4.500M10 1h4v4M14 1L9.500 5.500M1 10v4h4M1 14l4.500-4.500M14 10v4h-4M14 14L9.500 9.500" /></Svg></button>
      </div>
    </footer>
  );
}

function Watermark() {
  return (
    <div className="pointer-events-none absolute right-[11px] bottom-[7px] z-30 flex items-center">
      <svg width="44" height="42" viewBox="0 0 44 42" aria-hidden="true">
        <defs>
          <linearGradient id="wb" x1="1" y1="0" x2="0" y2="1"><stop offset="0" stopColor="#54c0f0" /><stop offset="1" stopColor="#4a8fd8" /></linearGradient>
          <linearGradient id="wgn" x1="1" y1="0" x2="0" y2="1"><stop offset="0" stopColor="#35b96b" /><stop offset=".6" stopColor="#7fcf6b" /><stop offset="1" stopColor="#e8e04a" /></linearGradient>
        </defs>
        <path d="M43 1C22 1 3 11 1 25c-1 8 6 12 14 9 9-3 12-12 8-17-4-3-11 0-12 7 4-5 9-4 8 0-1 5-8 8-12 5C2 22 16 8 43 1z" fill="url(#wb)" />
        <path d="M27 14c10-3 16 1 15 8-1 9-10 16-20 16-5 0-10 1-13 2 4-4 8-5 12-7 7-3 11-8 11-13 0-3-2-5-5-6z" fill="url(#wgn)" />
      </svg>
      <div className="flex flex-col whitespace-nowrap">
        <span className="text-[21px] leading-[23px] font-medium text-[#5a9bdc]">极光下载站</span>
        <span className="font-['Liberation_Sans'] text-[16px] leading-[20px] font-bold text-[#5cc088]">www.xz7.com</span>
      </div>
    </div>
  );
}

const meter = ["bg-[#8a8f98]", "bg-[#8a8f98]", "bg-[#8a8f98]", "bg-[#8a8f98]", "bg-[#8a8f98]", "bg-[#8a8f98]", "bg-[#e8b83e]", "bg-[#e8c83e]", "bg-[#e8d83e]", "bg-[#d8e04a]", "bg-[#c0e05a]", "bg-[#a8e066]", "bg-[#98e070]", "bg-[#88e080]", "bg-[#78e090]", "bg-[#68e0a0]", "bg-[#5ce0ac]", "bg-[#50e0b8]"];

export default function App() {
  return (
    <div className="relative flex h-screen flex-col overflow-hidden bg-[#f5f7f9] font-['Open_Sans','Noto_Sans_CJK_SC',sans-serif] text-[12px] leading-4 text-[#1c2536]">
      <TitleBar />
      <MenuRow />
      <Ribbon />
      <main className="flex min-h-0 flex-1">
        <div className="min-w-0 flex-1 overflow-hidden">
          <DocPage />
        </div>
        <ScrollBar />
        <StylePanel />
        <SideRail />
      </main>
      <StatusBar />
      <Dialog />
      <Watermark />
      <Svg w={16} h={6} className="absolute right-[14px] bottom-[44px] z-30"><circle cx="2.500" cy="3" r="1.600" /><circle cx="8" cy="3" r="1.600" /><circle cx="13.500" cy="3" r="1.600" /></Svg>
      <div className="absolute right-0 bottom-[6px] z-30 flex h-[60px] w-[10px] flex-col gap-px rounded-l-[3px] border border-r-0 border-[#3a3f4a] bg-[#4a4f5c] pt-[3px] pl-[3px]">
        {meter.map((c, i) => <span key={i} className={"h-[2px] w-[5px] shrink-0 " + c} />)}
      </div>
    </div>
  );
}
